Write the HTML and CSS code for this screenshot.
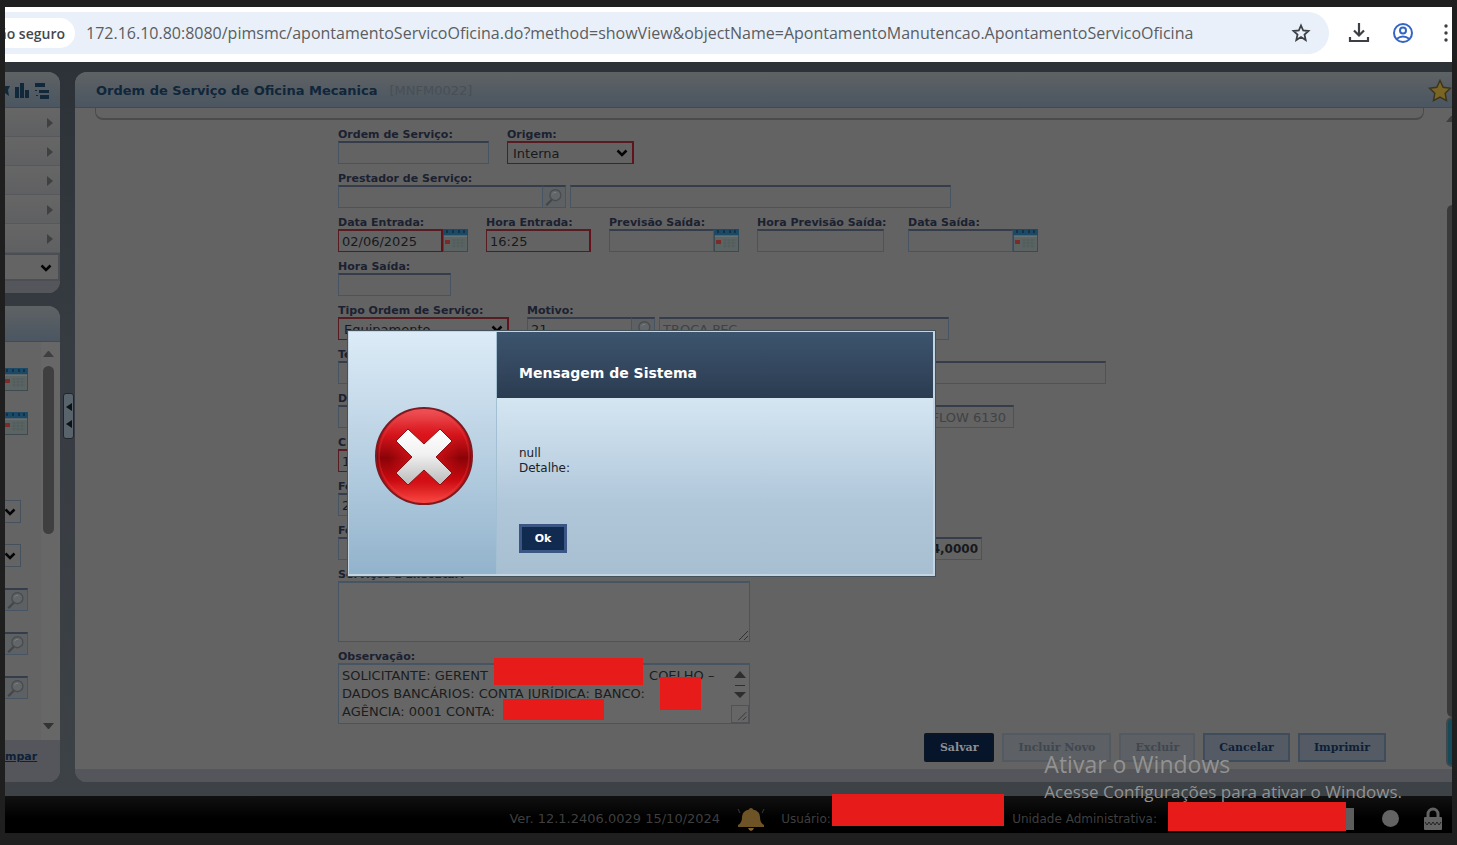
FILE: index.html
```html
<!DOCTYPE html>
<html lang="pt-BR">
<head>
  <meta charset="utf-8">
  <title>Ordem de Serviço de Oficina Mecanica</title>
  <link rel="stylesheet" href="styles.css">
</head>
<body>
  <!-- shared icons -->
  <svg class="sprite" aria-hidden="true">
    <symbol id="calendar" viewBox="0 0 25 23">
      <rect width="25" height="23" fill="#3d4a50"/>
      <rect x="1" y="7" width="23" height="15" fill="#5c6463"/>
      <rect width="25" height="6" fill="#1c4a66"/>
      <path d="M4 1v3M10 1v3M16 1v3M21 1v3" stroke="#123247" stroke-width="2"/>
      <path d="M1 7h23" stroke="#6d7c82"/>
      <path d="M9 11h13M9 14h13M9 17h13M11 10v9M15 10v9M19 10v9" stroke="#535f5c"/>
      <rect x="2" y="11" width="5" height="4" fill="#7c2b2b"/>
    </symbol>
    <symbol id="lens" viewBox="0 0 23 23">
      <circle cx="13" cy="9" r="6" fill="#626668" stroke="#494c4e" stroke-width="1.5"/>
      <path d="M9 14l-6 6" stroke="#434547" stroke-width="2.5"/>
      <path d="M10 8q1-3 4-2" stroke="#7b7f81" fill="none"/>
    </symbol>
    <symbol id="chevron" viewBox="0 0 12 8">
      <path d="M1.500 1.500L6 6l4.500-4.500" fill="none" stroke="#050505" stroke-width="2.500"/>
    </symbol>
    <symbol id="grip" viewBox="0 0 12 12">
      <path d="M2 11l9-9M7 11l4-4" stroke="#303234" stroke-width="1"/>
    </symbol>
  </svg>

  <header class="browser">
    <div class="omnibox">
      <span class="secure">ão seguro</span>
      <input class="url" type="text" aria-label="URL" value="172.16.10.80:8080/pimsmc/apontamentoServicoOficina.do?method=showView&amp;objectName=ApontamentoManutencao.ApontamentoServicoOficina">
      <button class="icon-btn" aria-label="Favorito">
        <svg width="20" height="20" viewBox="0 0 20 20"><path d="M10 2.500l2.200 5 5.300.5-4 3.600 1.200 5.400-4.700-2.900L5.300 17l1.200-5.400-4-3.600 5.300-.5z" fill="none" stroke="#3c3f43" stroke-width="1.800"/></svg>
      </button>
    </div>
    <button class="icon-btn" aria-label="Downloads">
      <svg width="22" height="22" viewBox="0 0 22 22"><path d="M11 1v12M6 8.500l5 5 5-5M2 15v4h18v-4" fill="none" stroke="#3c3f43" stroke-width="2.200"/></svg>
    </button>
    <button class="icon-btn" aria-label="Perfil">
      <svg width="22" height="22" viewBox="0 0 22 22" fill="none" stroke="#3465c4" stroke-width="2"><circle cx="11" cy="11" r="9"/><circle cx="11" cy="8.500" r="3"/><path d="M4.500 17q6.500-5 13 0"/></svg>
    </button>
    <button class="icon-btn menu" aria-label="Menu">
      <svg width="4" height="20" viewBox="0 0 4 20" fill="#3c3f43"><circle cx="2" cy="3" r="1.700"/><circle cx="2" cy="10" r="1.700"/><circle cx="2" cy="17" r="1.700"/></svg>
    </button>
  </header>

  <div class="app">
    <div class="workspace">
      <aside class="sidebar">
        <section class="panel">
          <div class="panel-head tools">
            <svg width="46" height="18" viewBox="0 0 46 18" fill="#10283a">
              <path d="M0 4h5l-2 4 1 6-4-3z"/>
              <path d="M10 5h4v11h-4zM15 1h4v15h-4zM20 8h4v8h-4z"/>
              <path d="M30 1h10v4H30zM34 8h10v3H34zM35 13h9v4h-9zM30 8h2v1h-2zM31 13h2v1h-2z"/>
            </svg>
          </div>
          <ul class="menu-list">
            <li></li><li></li><li></li><li></li><li></li>
          </ul>
          <div class="side-select">
            <select aria-label="Módulo"></select>
            <svg width="12" height="8"><use href="#chevron"/></svg>
          </div>
          <div class="panel-foot short"></div>
        </section>

        <section class="panel grow">
          <div class="panel-head"></div>
          <div class="side-body">
            <div class="side-fields">
              <svg class="cal" width="23" height="23" viewBox="2 0 23 23"><use href="#calendar" width="25" height="23"/></svg>
              <svg class="cal" width="23" height="23" viewBox="2 0 23 23"><use href="#calendar" width="25" height="23"/></svg>
              <span class="blank"></span>
              <span class="mini-select"><select aria-label="Filtro 1"></select><svg width="12" height="8"><use href="#chevron"/></svg></span>
              <span class="mini-select"><select aria-label="Filtro 2"></select><svg width="12" height="8"><use href="#chevron"/></svg></span>
              <button class="lens" aria-label="Pesquisar"><svg width="22" height="21"><use href="#lens"/></svg></button>
              <button class="lens" aria-label="Pesquisar"><svg width="22" height="21"><use href="#lens"/></svg></button>
              <button class="lens" aria-label="Pesquisar"><svg width="22" height="21"><use href="#lens"/></svg></button>
            </div>
            <div class="scroll">
              <i class="arrow-up"></i>
              <i class="thumb"></i>
              <i class="arrow-down"></i>
            </div>
          </div>
          <div class="panel-foot"><a href="#">mpar</a></div>
        </section>
      </aside>

      <div class="splitter">
        <button class="handle" aria-label="Recolher">
          <svg width="10" height="46" viewBox="0 0 10 46" fill="#0d1216"><path d="M8 10v8l-6-4zM8 27v8l-6-4z"/></svg>
        </button>
      </div>

      <main class="panel main">
        <div class="panel-head title-bar">
          <h1>Ordem de Serviço de Oficina Mecanica</h1>
          <span class="code">[MNFM0022]</span>
          <svg class="star" width="24" height="24" viewBox="0 0 24 24"><path d="M12 1.500l3.200 6.700 7.300 1-5.300 5.100 1.300 7.400L12 18.200l-6.500 3.500 1.300-7.400L1.500 9.200l7.300-1z" fill="#7a6522" stroke="#3b3420" stroke-width="1.500"/></svg>
        </div>
        <div class="main-body">
          <div class="main-content">
            <div class="group-end"></div>
            <form class="order" onsubmit="return false">
              <div class="row">
                <div class="field"><label for="ordem">Ordem de Serviço:</label><input id="ordem" class="w151" type="text"></div>
                <div class="field"><label for="origem">Origem:</label>
                  <span class="select w127"><select id="origem" class="req"><option>Interna</option></select><svg width="12" height="8"><use href="#chevron"/></svg></span></div>
              </div>
              <div class="row">
                <div class="field"><label for="prestador">Prestador de Serviço:</label>
                  <span class="combo"><input id="prestador" class="w205" type="text"><button class="lens" aria-label="Pesquisar prestador"><svg width="22" height="21"><use href="#lens"/></svg></button><input class="next w381" type="text" aria-label="Nome do prestador"></span></div>
              </div>
              <div class="row">
                <div class="field"><label for="dt-entrada">Data Entrada:</label>
                  <span class="combo"><input id="dt-entrada" class="req w105" type="text" value="02/06/2025"><svg class="cal" width="25" height="23"><use href="#calendar"/></svg></span></div>
                <div class="field"><label for="hr-entrada">Hora Entrada:</label><input id="hr-entrada" class="req w105" type="text" value="16:25"></div>
                <div class="field"><label for="prev">Previsão Saída:</label>
                  <span class="combo"><input id="prev" class="w105" type="text"><svg class="cal" width="25" height="23"><use href="#calendar"/></svg></span></div>
                <div class="field wide"><label for="hr-prev">Hora Previsão Saída:</label><input id="hr-prev" class="w127" type="text"></div>
                <div class="field"><label for="dt-saida">Data Saída:</label>
                  <span class="combo"><input id="dt-saida" class="w105" type="text"><svg class="cal" width="25" height="23"><use href="#calendar"/></svg></span></div>
              </div>
              <div class="row">
                <div class="field"><label for="hr-saida">Hora Saída:</label><input id="hr-saida" class="w113" type="text"></div>
              </div>
              <div class="row">
                <div class="field"><label for="tipo">Tipo Ordem de Serviço:</label>
                  <span class="select w171"><select id="tipo" class="req"><option>Equipamento</option></select><svg width="12" height="8"><use href="#chevron"/></svg></span></div>
                <div class="field"><label for="motivo">Motivo:</label>
                  <span class="combo"><input id="motivo" class="w105" type="text" value="21"><button class="lens" aria-label="Pesquisar motivo"><svg width="22" height="21"><use href="#lens"/></svg></button><input class="next w290" type="text" value="TROCA PEC" aria-label="Descrição do motivo" disabled></span></div>
              </div>
              <div class="row">
                <div class="field"><label for="f6">Te</label><input id="f6" class="w768" type="text"></div>
              </div>
              <div class="row">
                <div class="field"><label for="f7">D</label><input id="f7" class="w676 end" type="text" value="FLOW 6130" disabled></div>
              </div>
              <div class="row">
                <div class="field"><label for="f8">C</label><input id="f8" class="req w105" type="text" value="1"></div>
              </div>
              <div class="row">
                <div class="field"><label for="f9">Fo</label><input id="f9" class="w105" type="text" value="2"></div>
              </div>
              <div class="row">
                <div class="field"><label for="f10">Fo</label><input id="f10" class="w644 end total" type="text" value="4,0000"></div>
              </div>
              <div class="row">
                <div class="field"><label for="servicos">Serviços a Executar:</label>
                  <span class="area"><textarea id="servicos"></textarea><svg class="grip" width="12" height="12"><use href="#grip"/></svg></span></div>
              </div>
              <div class="row">
                <div class="field"><label for="obs">Observação:</label>
                  <span class="area">
                    <textarea id="obs" wrap="off">SOLICITANTE: GERENT                                       COELHO –
DADOS BANCÁRIOS: CONTA JURÍDICA: BANCO:
AGÊNCIA: 0001 CONTA:</textarea>
                    <svg class="area-bar" width="16" height="58" viewBox="0 0 16 58" fill="#2c2e30"><path d="M2 13h12L8 6zM3 20h10v1H3zM2 27h12l-6 6z"/></svg>
                    <svg class="grip boxed" width="18" height="18" viewBox="-5 -5 18 18"><use href="#grip" width="12" height="12"/></svg>
                    <span class="redact r1"></span><span class="redact r2"></span><span class="redact r3"></span>
                  </span></div>
              </div>
            </form>
            <div class="actions">
              <button class="btn primary">Salvar</button>
              <button class="btn" disabled>Incluir Novo</button>
              <button class="btn" disabled>Excluir</button>
              <button class="btn">Cancelar</button>
              <button class="btn">Imprimir</button>
            </div>
          </div>
          <div class="main-scroll"><i class="arrow-up"></i><i class="thumb"></i><i class="tab"></i></div>
        </div>
        <div class="main-foot"></div>
      </main>
    </div>

    <footer class="status">
      <span class="version">Ver. 12.1.2406.0029 15/10/2024</span>
      <span class="bell">
        <svg width="28" height="24" viewBox="0 0 28 24"><path d="M14 1q2 0 2 1.500Q23 4 23 10q0 6 4 8v2H1v-2q4-2 4-8 0-6 7-7.500Q12 1 14 1z" fill="#6e5327"/><path d="M11 21h6q-1 3-3 3t-3-3z" fill="#80622f"/><path d="M1 2l2 4M27 2l-2 4" stroke="#3a3b3c"/></svg>
      </span>
      <span class="who">Usuário:<i class="redact user"></i></span>
      <label class="unit" for="unidade">Unidade Administrativa:</label>
      <span class="unit-select"><select id="unidade"></select><i class="redact"></i></span>
      <span class="dot"></span>
      <svg class="lock" width="20" height="24" viewBox="0 0 20 24"><path d="M5 11V7a5 5 0 0 1 10 0v4" fill="none" stroke="#636363" stroke-width="3"/><rect x="1" y="10" width="18" height="13" rx="1" fill="#636363"/><path d="M2 15l2 3 2-3 2 3 2-3 2 3 2-3 2 3 2-3" fill="none" stroke="#222"/></svg>
    </footer>

    <div class="watermark">
      <div class="wm-title">Ativar o Windows</div>
      <div class="wm-text">Acesse Configurações para ativar o Windows.</div>
    </div>

    <div class="dialog" role="dialog" aria-labelledby="dlg-title">
      <div class="dialog-icon">
        <svg width="100" height="100" viewBox="0 0 100 100">
          <defs>
            <linearGradient id="red" x1="0" y1="0" x2="0" y2="1"><stop offset="0" stop-color="#f2585c"/><stop offset=".28" stop-color="#d5141b"/><stop offset=".52" stop-color="#8a0307"/><stop offset=".75" stop-color="#c90a10"/><stop offset="1" stop-color="#ff4a44"/></linearGradient>
            <radialGradient id="glow" cx=".5" cy=".5" r=".5"><stop offset="0" stop-color="#e8151c"/><stop offset="1" stop-color="#e8151c" stop-opacity="0"/></radialGradient>
            <linearGradient id="cross" x1="0" y1="0" x2="0" y2="1"><stop offset="0" stop-color="#fff"/><stop offset=".45" stop-color="#f1f1f1"/><stop offset="1" stop-color="#b9b9b9"/></linearGradient>
          </defs>
          <circle cx="50" cy="50" r="48" fill="url(#red)" stroke="#7e1a20" stroke-width="2"/>
          <circle cx="50" cy="50" r="36" fill="url(#glow)"/>
          <circle cx="50" cy="50" r="45" fill="none" stroke="#f0474c" stroke-opacity=".3" stroke-width="1.500"/>
          <path d="M34 23l16 15 16-15 12 12-16 16 16 16-12 12-16-15-16 15-12-12 16-16-16-16z" fill="url(#cross)" stroke="#8c1015" stroke-width="1"/>
        </svg>
      </div>
      <div class="dialog-main">
        <h2 id="dlg-title">Mensagem de Sistema</h2>
        <div class="dialog-body">
          <p>null<br>Detalhe:</p>
          <button class="ok">Ok</button>
        </div>
      </div>
    </div>
  </div>
</body>
</html>
```
FILE: styles.css
```css
*, *::before, *::after {
  box-sizing: border-box;
}
body {
  margin: 0;
  padding: 7px 5px 12px;
  min-height: 100vh;
  display: flex;
  flex-direction: column;
  background: #1f1f1f;
  font-family: Verdana, "DejaVu Sans", sans-serif;
  font-size: 11px;
  overflow: hidden;
}
button, input, select, textarea {
  font-family: inherit;
  margin: 0;
  padding: 0;
  border: none;
  border-radius: 0;
  background: none;
  outline: none;
}
svg {
  display: block;
  flex: none;
}
.sprite {
  position: absolute;
  width: 0;
  height: 0;
}

/* browser bar */
.browser {
  height: 55px;
  display: flex;
  align-items: center;
  padding-bottom: 3px;
  background: #fff;
  overflow: hidden;
  font-family: "Segoe UI", "Open Sans", sans-serif;
}
.omnibox {
  flex: 1;
  height: 42px;
  display: flex;
  align-items: center;
  padding-right: 18px;
  margin-right: 19px;
  background: #e9f0fa;
  border-radius: 0 21px 21px 0;
}
.secure {
  width: 70px;
  height: 30px;
  display: flex;
  align-items: center;
  justify-content: flex-end;
  padding-right: 10px;
  overflow: hidden;
  white-space: nowrap;
  background: #fff;
  border-radius: 0 15px 15px 0;
  font-size: 14px;
  font-weight: 600;
  color: #45484c;
}
.url {
  flex: 1;
  min-width: 0;
  margin-left: 11px;
  font-size: 16px;
  color: #5a5d61;
}
.icon-btn {
  margin-right: 22px;
}
.omnibox .icon-btn {
  margin-right: 0;
}
.icon-btn.menu {
  margin: 0 4px 0 8px;
}

/* app shell */
.app {
  position: relative;
  flex: 1;
  display: flex;
  flex-direction: column;
}
.workspace {
  flex: 1;
  display: flex;
  padding: 10px 0 14px;
  background: linear-gradient(#2d3239, #373b42 40%, #3d4246);
}
.panel {
  display: flex;
  flex-direction: column;
  background: #646464;
  overflow: hidden;
}
.panel-head {
  height: 36px;
  flex: none;
  background: linear-gradient(#5e6264, #4b5661);
  border-bottom: 1px solid #414b55;
}
.sidebar {
  width: 55px;
  display: flex;
  flex-direction: column;
  gap: 13px;
}
.sidebar .panel {
  border-radius: 0 12px 12px 0;
}
.grow {
  flex: 1;
}
.tools {
  padding-top: 10px;
}
.menu-list {
  margin: 0;
  padding: 0;
  list-style: none;
}
.menu-list li {
  height: 29px;
  padding: 10px 7px 0 0;
  border-bottom: 1px solid #56585b;
  background: linear-gradient(#666, #5f6062);
}
.menu-list li::after {
  content: "";
  display: block;
  margin-left: auto;
  width: 6px;
  border-left: 6px solid #404040;
  border-top: 5px solid transparent;
  border-bottom: 5px solid transparent;
}
.side-select {
  height: 28px;
  position: relative;
  border: 2px solid #4b4f54;
  border-left: none;
}
.side-select select {
  appearance: none;
  width: 100%;
  height: 100%;
}
.side-select svg {
  position: absolute;
  right: 6px;
  top: 9px;
}
.panel-foot {
  height: 42px;
  flex: none;
  padding: 10px 23px 0 0;
  text-align: right;
  background: #54565b;
}
.panel-foot.short {
  height: 12px;
}
.panel-foot a {
  color: #0e2138;
  font-weight: bold;
}
.side-body {
  flex: 1;
  display: flex;
  justify-content: space-between;
}
.side-fields {
  display: flex;
  flex-direction: column;
  gap: 21px;
  padding-top: 26px;
}
.blank, .mini-select {
  height: 23px;
}
.mini-select {
  position: relative;
  width: 16px;
  border: 1px solid #45515d;
  border-left: none;
}
.mini-select select {
  appearance: none;
  width: 100%;
  height: 100%;
}
.mini-select svg {
  position: absolute;
  left: -1px;
  top: 7px;
}
.scroll {
  width: 19px;
  padding: 9px 0 11px 2px;
  display: flex;
  flex-direction: column;
  gap: 9px;
  background: #676767;
}
.arrow-up, .arrow-down {
  width: 11px;
  border-left: 5px solid transparent;
  border-right: 5px solid transparent;
  border-bottom: 6px solid #3f3f3f;
}
.arrow-down {
  border-bottom: none;
  border-top: 6px solid #333;
  margin-top: auto;
}
.thumb {
  width: 11px;
  height: 168px;
  border-radius: 6px;
  background: #3f3f3f;
}
.splitter {
  width: 15px;
  display: flex;
  align-items: center;
  justify-content: flex-end;
  padding: 0 1px 22px 0;
}
.handle {
  width: 11px;
  height: 46px;
  border: 1px solid #20262c;
  border-radius: 3px;
  background: #59636b;
  overflow: hidden;
}
.handle svg {
  margin-top: -1px;
}

/* main panel */
.main {
  flex: 1;
  min-width: 0;
  border-radius: 12px 0 0 12px;
  background: #636363;
}
.title-bar {
  display: flex;
  align-items: center;
  padding: 2px 0 0 21px;
}
.title-bar h1 {
  margin: 0;
  font-size: 13px;
  color: #10263a;
}
.code {
  margin-left: 12px;
  font-size: 13px;
  color: #484f56;
}
.star {
  margin-left: auto;
}
.main-body {
  flex: 1;
  display: flex;
}
.main-content {
  flex: 1;
  min-width: 0;
}
.group-end {
  height: 12px;
  margin: 0 22px 0 20px;
  border: solid #4b4b4b;
  border-width: 0 1px 2px;
  border-radius: 0 0 8px 8px;
}
.main-scroll {
  width: 6px;
  padding-top: 8px;
  overflow: hidden;
}
.main-scroll i {
  display: block;
}
.main-scroll .thumb {
  height: 512px;
  margin: 83px 0 0 1px;
  background: #3a3a3a;
}
.tab {
  height: 50px;
  width: 12px;
  border: 2px solid #42474b;
  border-radius: 6px;
  background: #174a58;
}
.main-foot {
  height: 13px;
  background: #54565b;
}

/* form */
.order {
  max-width: 845px;
  margin: 7px auto 0;
  display: flex;
  flex-direction: column;
  gap: 7px;
}
.row {
  display: flex;
  gap: 18px;
}
.wide {
  width: 133px;
}
.field label {
  display: block;
  height: 14px;
  line-height: 16px;
  font-size: 11px;
  font-weight: bold;
  color: #1b2130;
  white-space: nowrap;
}
.field input, .field select, .lens {
  display: block;
  height: 23px;
  border: 1px solid #465463;
  border-top: 2px solid #343d49;
}
.field input, .field select {
  padding-left: 3px;
  font-size: 13px;
  color: #17191c;
}
.field input:disabled {
  color: #404244;
}
.field .req {
  border-color: #561c22;
  border-right: 2px solid #641219;
}
.combo {
  display: flex;
}
.lens {
  border-left: none;
  background: #5e6164;
}
.field .next {
  margin-left: 4px;
}
.select {
  display: block;
  position: relative;
}
.select select {
  appearance: none;
  width: 100%;
  padding-left: 5px;
}
.select svg {
  position: absolute;
  right: 6px;
  top: 8px;
}
.field .end {
  text-align: right;
  padding-right: 7px;
}
.field .total {
  font-weight: bold;
  font-size: 12px;
  padding-right: 3px;
}
.w105 { width: 105px; }
.w113 { width: 113px; }
.w127 { width: 127px; }
.w151 { width: 151px; }
.w171 { width: 171px; }
.w205 { width: 205px; }
.w290 { width: 290px; }
.w381 { width: 381px; }
.w644 { width: 644px; }
.w676 { width: 676px; }
.w768 { width: 768px; }

.area {
  display: block;
  position: relative;
  width: 412px;
}
.area textarea {
  display: block;
  width: 100%;
  height: 61px;
  padding: 2px 3px;
  resize: none;
  overflow: hidden;
  border: 2px solid #465463;
  border-width: 2px 1px 1px;
  background: #666;
  font-size: 13px;
  line-height: 18px;
  color: #1b1d20;
}
.grip {
  position: absolute;
  right: 1px;
  bottom: 1px;
}
.grip.boxed {
  border: 1px solid #505255;
}
.area-bar {
  position: absolute;
  right: 2px;
  top: 2px;
}
.redact {
  position: absolute;
  background: #e81b1b;
}
.r1 { left: 156px; top: -5px; width: 149px; height: 27px; }
.r2 { left: 322px; top: 14px; width: 41px; height: 33px; }
.r3 { left: 165px; top: 36px; width: 101px; height: 21px; }

.actions {
  display: flex;
  justify-content: flex-end;
  gap: 8px;
  padding: 9px 60px 0 0;
}
.btn {
  height: 29px;
  padding: 0 14px;
  border: 2px solid #3e4c5c;
  background: #545b64;
  font-family: "DejaVu Serif", serif;
  font-size: 11px;
  font-weight: bold;
  color: #0f1f36;
}
.btn.primary {
  border-color: #0a1626;
  border-radius: 2px;
  background: #06152a;
  color: #8a8f96;
}
.btn:disabled {
  border-color: #535a62;
  background: #5d6064;
  color: #40474f;
}

/* status bar */
.status {
  height: 37px;
  display: flex;
  align-items: center;
  justify-content: flex-end;
  padding: 8px 9px 0 0;
  background: linear-gradient(#111, #000 60%);
  font-size: 12px;
  color: #3f3f3f;
}
.version {
  font-size: 13px;
}
.bell {
  margin: 0 16px 0 17px;
}
.who, .unit-select {
  position: relative;
}
.who {
  width: 231px;
}
.user {
  left: 51px;
  top: -18px;
  width: 172px;
  height: 32px;
}
.unit-select {
  width: 186px;
  height: 22px;
  margin-left: 11px;
}
.unit-select select {
  appearance: none;
  width: 100%;
  height: 100%;
  background: #5d5d5d;
}
.unit-select .redact {
  left: 0;
  top: -6px;
  right: 8px;
  height: 29px;
}
.dot {
  width: 17px;
  height: 17px;
  margin: 0 24px 0 28px;
  border-radius: 50%;
  background: #636363;
}
.watermark {
  position: absolute;
  right: 50px;
  bottom: 29px;
  font-family: "Segoe UI", "Open Sans", sans-serif;
  color: #929292;
}
.wm-title {
  font-size: 23px;
  line-height: 30px;
}
.wm-text {
  font-size: 17px;
  line-height: 25px;
}

/* system message */
.dialog {
  position: absolute;
  left: 343px;
  top: 269px;
  width: 587px;
  height: 245px;
  display: flex;
  border: 1px solid #c3d5e2;
  border-width: 1px 2px 2px 1px;
  box-shadow: 0 0 0 1px #44505a;
}
.dialog-icon {
  width: 148px;
  display: flex;
  align-items: center;
  justify-content: center;
  padding: 6px 0 0 2px;
  border-right: 1px solid #a3c0d3;
  background: linear-gradient(#dcebf7, #b8d0e2 50%, #92b3cc);
}
.dialog-main {
  flex: 1;
  display: flex;
  flex-direction: column;
}
.dialog h2 {
  margin: 0;
  padding: 32px 22px 0;
  height: 66px;
  font-size: 14px;
  line-height: 18px;
  color: #fff;
  background: linear-gradient(#3d546e, #2b3c51);
}
.dialog-body {
  flex: 1;
  padding: 48px 22px 0;
  background: linear-gradient(#d5e6f2, #b0c7da 60%, #a8bfd2);
}
.dialog p {
  margin: 0 0 48px;
  font-size: 12px;
  line-height: 15px;
  color: #1c2227;
}
.ok {
  width: 48px;
  height: 29px;
  border: 3px solid #3c5684;
  background: #112b50;
  color: #fff;
  font-size: 11px;
  font-weight: bold;
}
```
